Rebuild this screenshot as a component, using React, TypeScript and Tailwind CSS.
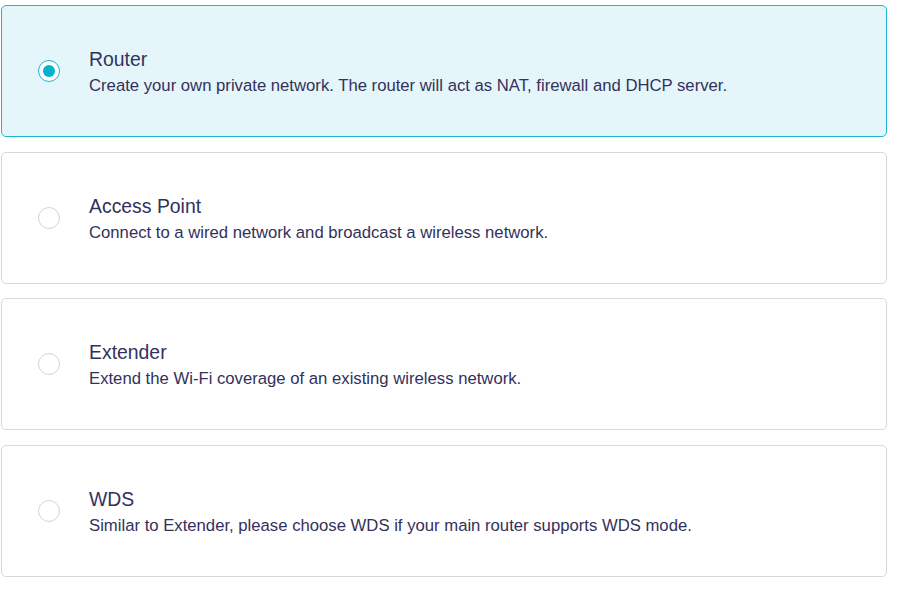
import { useState } from "react";

const modes = [
  {
    id: "router",
    title: "Router",
    desc: "Create your own private network. The router will act as NAT, firewall and DHCP server.",
  },
  {
    id: "ap",
    title: "Access Point",
    desc: "Connect to a wired network and broadcast a wireless network.",
  },
  {
    id: "extender",
    title: "Extender",
    desc: "Extend the Wi-Fi coverage of an existing wireless network.",
  },
  {
    id: "wds",
    title: "WDS",
    desc: "Similar to Extender, please choose WDS if your main router supports WDS mode.",
  },
];

export default function App() {
  const [mode, setMode] = useState("router");

  return (
    <div
      className="w-[912px] h-[589px] bg-white pl-px pt-[5px] flex flex-col gap-[14.7px]"
      style={{ fontFamily: '"Liberation Sans", Arial, sans-serif' }}
    >
      {modes.map((m) => {
        const selected = mode === m.id;
        return (
          <div
            key={m.id}
            onClick={() => setMode(m.id)}
            className={`w-[886px] h-[132px] shrink-0 rounded-[5px] border flex items-center pl-[36px] cursor-pointer ${
              selected ? "border-[#1cb5d2] bg-[#e5f6fb]" : "border-[#d8d8d8] bg-white"
            }`}
          >
            <div
              className={`w-[22px] h-[22px] rounded-full border flex items-center justify-center shrink-0 ${
                selected ? "border-[#1cb5d2] bg-white" : "border-[#d4d4d4] bg-white"
              }`}
            >
              {selected && <div className="w-[12px] h-[12px] rounded-full bg-[#04b1cf]" />}
            </div>
            <div className="ml-[29px] text-[#33315c]">
              <div className="text-[19.4px] leading-[26px]">{m.title}</div>
              <div className="text-[16.7px] leading-[20px] mt-[4px]">{m.desc}</div>
            </div>
          </div>
        );
      })}
    </div>
  );
}
